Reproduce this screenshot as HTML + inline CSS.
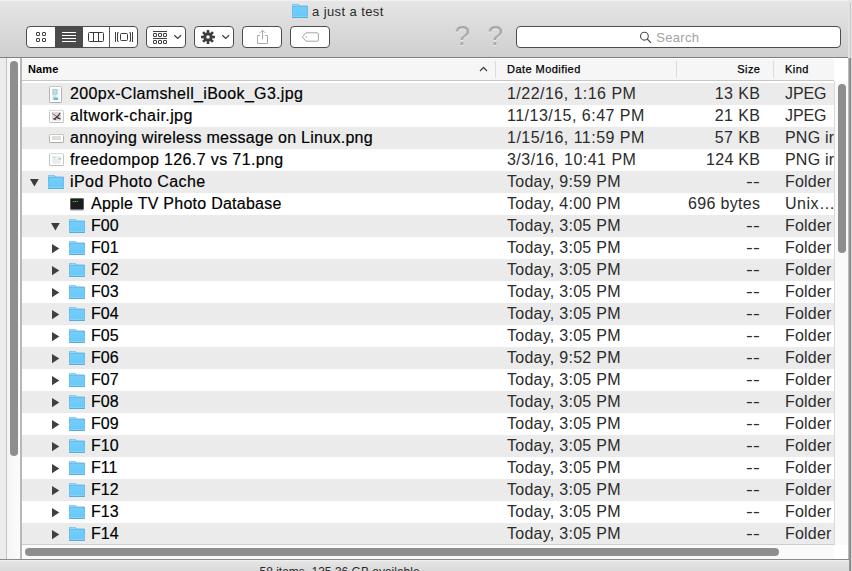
<!DOCTYPE html>
<html><head><meta charset="utf-8"><title>a just a test</title>
<style>
html,body{margin:0;padding:0}
body{width:852px;height:571px;overflow:hidden;position:relative;background:#ececec;font-family:"Liberation Sans",sans-serif;color:#1a1a1a}
.abs{position:absolute}
#toolbar{position:absolute;left:0;top:0;width:849px;border-top-right-radius:4px;height:57px;background:linear-gradient(#e6e6e6,#cfcfcf);border-bottom:1px solid #818181}
#title{position:absolute;left:312px;top:4px;font-size:13px;letter-spacing:0.4px;color:#2a2a2a;line-height:16px;white-space:nowrap}
.btn{position:absolute;top:26px;height:20px;border:1px solid #4e4e4e;border-radius:4px;background:#fff;box-sizing:content-box}
#content{position:absolute;left:22px;top:58px;width:812px;height:487px;background:#fff}
#hdr{position:absolute;left:22px;top:58px;width:812px;height:22px;background:#f6f6f6;border-top:1px solid #fff;box-sizing:content-box;height:21px;border-bottom:1px solid #c6c6c6}
.h{position:absolute;top:63px;font-size:11px;line-height:13px;color:#000;white-space:nowrap;letter-spacing:0.45px;-webkit-text-stroke:0.25px #000}
.vd{position:absolute;top:61px;width:1px;height:17px;background:#dcdcdc}
.row{position:absolute;left:22px;width:812px;height:22px}
.ic{position:absolute;display:block}
.th{position:absolute;background:#fff;box-shadow:0 0 0 0.5px rgba(0,0,0,.3),0 0.6px 1.4px rgba(0,0,0,.45)}
.t{position:absolute;font-size:16px;line-height:22px;height:22px;white-space:nowrap;color:#2b2b2b;margin-top:0px}
.nm{color:#000;-webkit-text-stroke:0.18px #000}
.sz{text-align:right}
.dd{display:inline-block;transform:scaleX(1.27);transform-origin:100% 50%}
.kd{width:49px;overflow:hidden}
</style></head><body>
<svg width="0" height="0" style="position:absolute"><defs><linearGradient id="fg" x1="0" y1="0" x2="0" y2="1"><stop offset="0" stop-color="#74cefa"/><stop offset="1" stop-color="#6ac7f7"/></linearGradient></defs></svg>
<div id="toolbar"></div>
<div class="abs" style="left:0;top:0;width:849px;height:1px;background:#f1f1f1"></div>
<svg class="ic" style="left:292px;top:4px" width="16" height="14" viewBox="0 0 16 14"><path d="M0.300 0.900Q0.300 0.300 0.900 0.300H5.900Q6.500 0.300 6.900 0.800L7.700 2H15.100Q15.700 2 15.700 2.600V6H0.300Z" fill="#8ad5fa" stroke="#56b0e6" stroke-width="0.600"/><path d="M1 1.300H6" stroke="#b2e5fc" stroke-width="0.700"/><path d="M0.300 2.900Q0.300 2.300 0.900 2.300H15.100Q15.700 2.300 15.700 2.900V13.100Q15.700 13.700 15.100 13.700H0.900Q0.300 13.700 0.300 13.100Z" fill="url(#fg)" stroke="#4fabe3" stroke-width="0.600"/><path d="M0.800 12.700H15.200" stroke="#90dcfb" stroke-width="0.700"/><path d="M0.300 13.600H15.700" stroke="#479fd8" stroke-width="0.700"/></svg>
<div id="title">a just a test</div>

<!-- segmented view buttons -->
<div class="btn" style="left:26px;width:110px"></div>
<div class="abs" style="left:55px;top:26px;width:28px;height:22px;background:#4b4b4b"></div>
<div class="abs" style="left:109px;top:27px;width:1px;height:20px;background:#5a5a5a"></div>
<svg class="ic" style="left:26px;top:26px" width="112" height="22" viewBox="0 0 112 22">
 <g fill="none" stroke="#3c3c3c" stroke-width="1">
  <rect x="10.500" y="6.500" width="3" height="3" rx="0.5"/><rect x="16.500" y="6.500" width="3" height="3" rx="0.5"/><rect x="10.500" y="12.500" width="3" height="3" rx="0.5"/><rect x="16.500" y="12.500" width="3" height="3" rx="0.5"/>
 </g>
 <g stroke="#fff" stroke-width="1"><path d="M36 6.500H50M36 9.500H50M36 12.500H50M36 15.500H50"/></g>
 <g fill="none" stroke="#3c3c3c" stroke-width="1"><rect x="62.500" y="6.500" width="15" height="9" rx="1"/><path d="M67.500 6.500V15.500M72.500 6.500V15.500"/></g>
 <g fill="none" stroke="#3c3c3c" stroke-width="1"><rect x="94.500" y="7.500" width="7" height="7" rx="1"/><path d="M89.500 6V16M92.700 6.700H91.500V15.300H92.700M103.300 6.700H104.500V15.300H103.300M106.500 6V16"/></g>
</svg>

<!-- arrange button -->
<div class="btn" style="left:146px;width:38px"></div>
<svg class="ic" style="left:146px;top:26px" width="40" height="22" viewBox="0 0 40 22">
 <g fill="none" stroke="#3c3c3c" stroke-width="1"><path d="M7 5.500H21M7 12.500H21"/><rect x="7.500" y="7.500" width="3" height="3" rx="0.400"/><rect x="12.500" y="7.500" width="3" height="3" rx="0.400"/><rect x="17.500" y="7.500" width="3" height="3" rx="0.400"/><rect x="7.500" y="14.500" width="3" height="3" rx="0.400"/><rect x="12.500" y="14.500" width="3" height="3" rx="0.400"/><rect x="17.500" y="14.500" width="3" height="3" rx="0.400"/>
 <path d="M28.300 9.300L31.700 12.500L35.100 9.300" stroke-width="1.200"/></g>
</svg>

<!-- action button -->
<div class="btn" style="left:194px;width:38px"></div>
<svg class="ic" style="left:194px;top:26px" width="40" height="22" viewBox="0 0 40 22">
 <g transform="translate(14,11)" fill="#3c3c3c">
  <circle r="4.600"/>
  <g id="teeth"><rect x="-1.300" y="-7" width="2.600" height="14"/><rect x="-1.300" y="-7" width="2.600" height="14" transform="rotate(45)"/><rect x="-1.300" y="-7" width="2.600" height="14" transform="rotate(90)"/><rect x="-1.300" y="-7" width="2.600" height="14" transform="rotate(135)"/></g>
  <circle r="1.800" fill="#fff"/>
 </g>
 <path d="M28.300 9.300L31.700 12.500L35.100 9.300" fill="none" stroke="#3c3c3c" stroke-width="1.200"/>
</svg>

<!-- share -->
<div class="btn" style="left:242px;width:38px"></div>
<svg class="ic" style="left:242px;top:26px" width="40" height="22" viewBox="0 0 40 22">
 <g fill="none" stroke="#aaa" stroke-width="1"><path d="M18 9.500H15.500V17.500H25.500V9.500H23"/><path d="M20.500 13.500V4.200M17.700 7L20.500 4.200L23.300 7"/></g>
</svg>

<!-- tag -->
<div class="btn" style="left:290px;width:38px"></div>
<svg class="ic" style="left:290px;top:26px" width="40" height="22" viewBox="0 0 40 22">
 <path d="M12.300 11L16 6.800H27.400Q28.400 6.800 28.400 7.800V14.200Q28.400 15.200 27.400 15.200H16Z" fill="none" stroke="#a4a4a4" stroke-width="1"/><circle cx="16.200" cy="11" r="0.800" fill="#a4a4a4"/>
</svg>

<div class="abs" style="left:454.5px;top:20px;font-size:28px;line-height:32px;color:#a9a9a9;text-shadow:0 1px 0 rgba(255,255,255,.5)">?</div>
<div class="abs" style="left:487.5px;top:20px;font-size:28px;line-height:32px;color:#a9a9a9;text-shadow:0 1px 0 rgba(255,255,255,.5)">?</div>

<!-- search -->
<div class="btn" style="left:516px;width:323px;height:19.5px"></div>
<svg class="ic" style="left:639px;top:31px" width="14" height="14" viewBox="0 0 14 14"><circle cx="5.400" cy="5.200" r="3.900" fill="none" stroke="#4a4a4a" stroke-width="1.100"/><path d="M8.200 8L12 11.800" stroke="#4a4a4a" stroke-width="1.200"/></svg>
<div class="abs" style="left:656.3px;top:29.500px;font-size:13px;letter-spacing:0.3px;line-height:15px;color:#a2a2a2">Search</div>

<!-- left gutter -->
<div class="abs" style="left:0;top:58px;width:6px;height:501px;background:#ececec"></div>
<div class="abs" style="left:6px;top:58px;width:1px;height:501px;background:#c2c2c2"></div>
<div class="abs" style="left:7px;top:58px;width:14px;height:501px;background:linear-gradient(90deg,#f5f5f5,#fcfcfc)"></div>
<div class="abs" style="left:20.300px;top:58px;width:1.600px;height:501px;background:#b8b8b8"></div>
<div class="abs" style="left:10px;top:61px;width:7.800px;height:395px;border-radius:3.900px;background:#8e8e8e"></div>

<div id="content"></div>
<div id="hdr"></div>
<div class="h" style="left:28px;font-weight:bold;letter-spacing:0.15px;-webkit-text-stroke:0">Name</div>
<svg class="ic" style="left:479px;top:66px" width="9" height="6" viewBox="0 0 9 6"><path d="M1 5L4.500 1.500L8 5" fill="none" stroke="#444" stroke-width="1.300"/></svg>
<div class="vd" style="left:495px"></div>
<div class="h" style="left:507px">Date Modified</div>
<div class="vd" style="left:676px"></div>
<div class="h" style="left:700.45px;width:60px;text-align:right">Size</div>
<div class="vd" style="left:773px"></div>
<div class="h" style="left:785px">Kind</div>

<div class="row" style="top:83px;background:#ebebeb">
</div>
<div class="th" style="left:50px;top:87px;width:11px;height:14.5px"></div><svg class="ic" style="left:51.5px;top:88.5px" width="8" height="11.500" viewBox="0 0 8 11.5"><rect width="8" height="11.500" fill="#e9f1f1"/><rect x="0.5" y="0" width="5.500" height="5.500" fill="#9ccdd2"/><rect x="1.500" y="1" width="3" height="3.500" fill="#c4e2e4"/><rect x="5.500" y="0" width="2.500" height="11.500" fill="#f6f8f8"/><rect x="1" y="6" width="3" height="2.500" fill="#d5e5e6"/><rect x="1.500" y="8.500" width="4.500" height="2.500" fill="#74b7c2"/></svg>
<div class="t nm" style="left:70px;top:83px;letter-spacing:0.324px">200px-Clamshell_iBook_G3.jpg</div>
<div class="t dt" style="left:507px;top:83px;letter-spacing:0.467px">1/22/16, 1:16 PM</div>
<div class="t sz" style="left:660.400px;width:100px;top:83px;letter-spacing:0.400px">13 KB</div>
<div class="t kd" style="left:785px;top:83px;letter-spacing:-0.100px">JPEG</div>
<div class="row" style="top:105px;background:#ffffff">
</div>
<div class="th" style="left:50px;top:110.7px;width:12.5px;height:11.5px"></div><svg class="ic" style="left:51.5px;top:112.2px" width="9.500" height="8.500" viewBox="0 0 9.5 8.5"><rect width="9.500" height="8.500" fill="#d9dade"/><path d="M0.300 1.500L7.500 6.300" stroke="#cf4a3c" stroke-width="1"/><path d="M2 7.500L6.500 3.500L8 1M4.500 5.500L8.500 7" stroke="#3a3a40" stroke-width="1.200" fill="none"/><path d="M1 6.500L4 7.800" stroke="#555" stroke-width="1"/></svg>
<div class="t nm" style="left:70px;top:105px;letter-spacing:0.420px">altwork-chair.jpg</div>
<div class="t dt" style="left:507px;top:105px;letter-spacing:0.484px">11/13/15, 6:47 PM</div>
<div class="t sz" style="left:660.400px;width:100px;top:105px;letter-spacing:0.400px">21 KB</div>
<div class="t kd" style="left:785px;top:105px;letter-spacing:-0.100px">JPEG</div>
<div class="row" style="top:127px;background:#ebebeb">
</div>
<div class="th" style="left:50px;top:134.5px;width:12.5px;height:7px"></div><div class="abs" style="left:51.5px;top:136px;width:9.5px;height:4px;background:#dfdfd8"></div>
<div class="t nm" style="left:70px;top:127px;letter-spacing:0.270px">annoying wireless message on Linux.png</div>
<div class="t dt" style="left:507px;top:127px;letter-spacing:0.484px">1/15/16, 11:59 PM</div>
<div class="t sz" style="left:660.400px;width:100px;top:127px;letter-spacing:0.400px">57 KB</div>
<div class="t kd" style="left:785px;top:127px;letter-spacing:0.200px">PNG ir</div>
<div class="row" style="top:149px;background:#ffffff">
</div>
<div class="th" style="left:50px;top:154px;width:12.5px;height:11.3px"></div><svg class="ic" style="left:51.5px;top:155.5px" width="9.500" height="8.300" viewBox="0 0 9.5 8.3"><rect width="9.500" height="8.300" fill="#f1f3f3"/><rect x="0.5" y="1" width="3" height="1" fill="#bcd7ee"/><rect x="6.500" y="2" width="2.500" height="1.500" fill="#8fd694"/><rect x="0.5" y="3.500" width="5" height="0.800" fill="#e2dada"/><rect x="0.5" y="5.500" width="8" height="0.800" fill="#dfe6e6"/></svg>
<div class="t nm" style="left:70px;top:149px;letter-spacing:0.380px">freedompop 126.7 vs 71.png</div>
<div class="t dt" style="left:507px;top:149px;letter-spacing:0.467px">3/3/16, 10:41 PM</div>
<div class="t sz" style="left:660.280px;width:100px;top:149px;letter-spacing:0.280px">124 KB</div>
<div class="t kd" style="left:785px;top:149px;letter-spacing:0.200px">PNG ir</div>
<div class="row" style="top:171px;background:#ebebeb">
</div>
<svg class="ic" style="left:29.8px;top:179.2px" width="9" height="8" viewBox="0 0 9 8"><path d="M0 0L8.800 0L4.400 7.400Z" fill="#3c3c3c"/></svg>
<svg class="ic" style="left:48px;top:175px" width="16" height="14" viewBox="0 0 16 14"><path d="M0.300 0.900Q0.300 0.300 0.900 0.300H5.900Q6.500 0.300 6.900 0.800L7.700 2H15.100Q15.700 2 15.700 2.600V6H0.300Z" fill="#8ad5fa" stroke="#56b0e6" stroke-width="0.600"/><path d="M1 1.300H6" stroke="#b2e5fc" stroke-width="0.700"/><path d="M0.300 2.900Q0.300 2.300 0.900 2.300H15.100Q15.700 2.300 15.700 2.900V13.100Q15.700 13.700 15.100 13.700H0.900Q0.300 13.700 0.300 13.100Z" fill="url(#fg)" stroke="#4fabe3" stroke-width="0.600"/><path d="M0.800 12.700H15.200" stroke="#90dcfb" stroke-width="0.700"/><path d="M0.300 13.600H15.700" stroke="#479fd8" stroke-width="0.700"/></svg>
<div class="t nm" style="left:70px;top:171px;letter-spacing:0.417px">iPod Photo Cache</div>
<div class="t dt" style="left:507px;top:171px;letter-spacing:0.270px">Today, 9:59 PM</div>
<div class="t sz" style="left:660.000px;width:100px;top:171px;letter-spacing:0.000px"><span class="dd">--</span></div>
<div class="t kd" style="left:785px;top:171px;letter-spacing:0.200px">Folder</div>
<div class="row" style="top:193px;background:#ffffff">
</div>
<svg class="ic" style="left:70px;top:198px" width="14" height="13" viewBox="0 0 14 13"><rect x="0.200" y="0.300" width="13.600" height="12.200" rx="1" fill="#9a9a9a"/><rect x="0.200" y="0.300" width="13.600" height="11.300" rx="1" fill="#555"/><rect x="0.900" y="1" width="12.200" height="10" rx="0.5" fill="#1d1d1d"/><rect x="2.800" y="3" width="1.300" height="1" fill="#3fc943"/><rect x="4.700" y="3" width="1.300" height="1" fill="#3fc943"/><rect x="6.600" y="3" width="1.300" height="1" fill="#3fc943"/></svg>
<div class="t nm" style="left:91px;top:193px;letter-spacing:0.260px">Apple TV Photo Database</div>
<div class="t dt" style="left:507px;top:193px;letter-spacing:0.270px">Today, 4:00 PM</div>
<div class="t sz" style="left:660.330px;width:100px;top:193px;letter-spacing:0.330px">696 bytes</div>
<div class="t kd" style="left:785px;top:193px;letter-spacing:0.500px">Unix…</div>
<div class="row" style="top:215px;background:#ebebeb">
</div>
<svg class="ic" style="left:50.8px;top:223.2px" width="9" height="8" viewBox="0 0 9 8"><path d="M0 0L8.800 0L4.400 7.400Z" fill="#3c3c3c"/></svg>
<svg class="ic" style="left:69px;top:219px" width="16" height="14" viewBox="0 0 16 14"><path d="M0.300 0.900Q0.300 0.300 0.900 0.300H5.900Q6.500 0.300 6.900 0.800L7.700 2H15.100Q15.700 2 15.700 2.600V6H0.300Z" fill="#8ad5fa" stroke="#56b0e6" stroke-width="0.600"/><path d="M1 1.300H6" stroke="#b2e5fc" stroke-width="0.700"/><path d="M0.300 2.900Q0.300 2.300 0.900 2.300H15.100Q15.700 2.300 15.700 2.900V13.100Q15.700 13.700 15.100 13.700H0.900Q0.300 13.700 0.300 13.100Z" fill="url(#fg)" stroke="#4fabe3" stroke-width="0.600"/><path d="M0.800 12.700H15.200" stroke="#90dcfb" stroke-width="0.700"/><path d="M0.300 13.600H15.700" stroke="#479fd8" stroke-width="0.700"/></svg>
<div class="t nm" style="left:91px;top:215px;letter-spacing:0.000px">F00</div>
<div class="t dt" style="left:507px;top:215px;letter-spacing:0.270px">Today, 3:05 PM</div>
<div class="t sz" style="left:660.000px;width:100px;top:215px;letter-spacing:0.000px"><span class="dd">--</span></div>
<div class="t kd" style="left:785px;top:215px;letter-spacing:0.200px">Folder</div>
<div class="row" style="top:237px;background:#ffffff">
</div>
<svg class="ic" style="left:52px;top:243.6px" width="8" height="10" viewBox="0 0 8 10"><path d="M0 0L7.300 4.600L0 9.200Z" fill="#404040"/></svg>
<svg class="ic" style="left:69px;top:241px" width="16" height="14" viewBox="0 0 16 14"><path d="M0.300 0.900Q0.300 0.300 0.900 0.300H5.900Q6.500 0.300 6.900 0.800L7.700 2H15.100Q15.700 2 15.700 2.600V6H0.300Z" fill="#8ad5fa" stroke="#56b0e6" stroke-width="0.600"/><path d="M1 1.300H6" stroke="#b2e5fc" stroke-width="0.700"/><path d="M0.300 2.900Q0.300 2.300 0.900 2.300H15.100Q15.700 2.300 15.700 2.900V13.100Q15.700 13.700 15.100 13.700H0.900Q0.300 13.700 0.300 13.100Z" fill="url(#fg)" stroke="#4fabe3" stroke-width="0.600"/><path d="M0.800 12.700H15.200" stroke="#90dcfb" stroke-width="0.700"/><path d="M0.300 13.600H15.700" stroke="#479fd8" stroke-width="0.700"/></svg>
<div class="t nm" style="left:91px;top:237px;letter-spacing:0.000px">F01</div>
<div class="t dt" style="left:507px;top:237px;letter-spacing:0.270px">Today, 3:05 PM</div>
<div class="t sz" style="left:660.000px;width:100px;top:237px;letter-spacing:0.000px"><span class="dd">--</span></div>
<div class="t kd" style="left:785px;top:237px;letter-spacing:0.200px">Folder</div>
<div class="row" style="top:259px;background:#ebebeb">
</div>
<svg class="ic" style="left:52px;top:265.6px" width="8" height="10" viewBox="0 0 8 10"><path d="M0 0L7.300 4.600L0 9.200Z" fill="#404040"/></svg>
<svg class="ic" style="left:69px;top:263px" width="16" height="14" viewBox="0 0 16 14"><path d="M0.300 0.900Q0.300 0.300 0.900 0.300H5.900Q6.500 0.300 6.900 0.800L7.700 2H15.100Q15.700 2 15.700 2.600V6H0.300Z" fill="#8ad5fa" stroke="#56b0e6" stroke-width="0.600"/><path d="M1 1.300H6" stroke="#b2e5fc" stroke-width="0.700"/><path d="M0.300 2.900Q0.300 2.300 0.900 2.300H15.100Q15.700 2.300 15.700 2.900V13.100Q15.700 13.700 15.100 13.700H0.900Q0.300 13.700 0.300 13.100Z" fill="url(#fg)" stroke="#4fabe3" stroke-width="0.600"/><path d="M0.800 12.700H15.200" stroke="#90dcfb" stroke-width="0.700"/><path d="M0.300 13.600H15.700" stroke="#479fd8" stroke-width="0.700"/></svg>
<div class="t nm" style="left:91px;top:259px;letter-spacing:0.000px">F02</div>
<div class="t dt" style="left:507px;top:259px;letter-spacing:0.270px">Today, 3:05 PM</div>
<div class="t sz" style="left:660.000px;width:100px;top:259px;letter-spacing:0.000px"><span class="dd">--</span></div>
<div class="t kd" style="left:785px;top:259px;letter-spacing:0.200px">Folder</div>
<div class="row" style="top:281px;background:#ffffff">
</div>
<svg class="ic" style="left:52px;top:287.6px" width="8" height="10" viewBox="0 0 8 10"><path d="M0 0L7.300 4.600L0 9.200Z" fill="#404040"/></svg>
<svg class="ic" style="left:69px;top:285px" width="16" height="14" viewBox="0 0 16 14"><path d="M0.300 0.900Q0.300 0.300 0.900 0.300H5.900Q6.500 0.300 6.900 0.800L7.700 2H15.100Q15.700 2 15.700 2.600V6H0.300Z" fill="#8ad5fa" stroke="#56b0e6" stroke-width="0.600"/><path d="M1 1.300H6" stroke="#b2e5fc" stroke-width="0.700"/><path d="M0.300 2.900Q0.300 2.300 0.900 2.300H15.100Q15.700 2.300 15.700 2.900V13.100Q15.700 13.700 15.100 13.700H0.900Q0.300 13.700 0.300 13.100Z" fill="url(#fg)" stroke="#4fabe3" stroke-width="0.600"/><path d="M0.800 12.700H15.200" stroke="#90dcfb" stroke-width="0.700"/><path d="M0.300 13.600H15.700" stroke="#479fd8" stroke-width="0.700"/></svg>
<div class="t nm" style="left:91px;top:281px;letter-spacing:0.000px">F03</div>
<div class="t dt" style="left:507px;top:281px;letter-spacing:0.270px">Today, 3:05 PM</div>
<div class="t sz" style="left:660.000px;width:100px;top:281px;letter-spacing:0.000px"><span class="dd">--</span></div>
<div class="t kd" style="left:785px;top:281px;letter-spacing:0.200px">Folder</div>
<div class="row" style="top:303px;background:#ebebeb">
</div>
<svg class="ic" style="left:52px;top:309.6px" width="8" height="10" viewBox="0 0 8 10"><path d="M0 0L7.300 4.600L0 9.200Z" fill="#404040"/></svg>
<svg class="ic" style="left:69px;top:307px" width="16" height="14" viewBox="0 0 16 14"><path d="M0.300 0.900Q0.300 0.300 0.900 0.300H5.900Q6.500 0.300 6.900 0.800L7.700 2H15.100Q15.700 2 15.700 2.600V6H0.300Z" fill="#8ad5fa" stroke="#56b0e6" stroke-width="0.600"/><path d="M1 1.300H6" stroke="#b2e5fc" stroke-width="0.700"/><path d="M0.300 2.900Q0.300 2.300 0.900 2.300H15.100Q15.700 2.300 15.700 2.900V13.100Q15.700 13.700 15.100 13.700H0.900Q0.300 13.700 0.300 13.100Z" fill="url(#fg)" stroke="#4fabe3" stroke-width="0.600"/><path d="M0.800 12.700H15.200" stroke="#90dcfb" stroke-width="0.700"/><path d="M0.300 13.600H15.700" stroke="#479fd8" stroke-width="0.700"/></svg>
<div class="t nm" style="left:91px;top:303px;letter-spacing:0.000px">F04</div>
<div class="t dt" style="left:507px;top:303px;letter-spacing:0.270px">Today, 3:05 PM</div>
<div class="t sz" style="left:660.000px;width:100px;top:303px;letter-spacing:0.000px"><span class="dd">--</span></div>
<div class="t kd" style="left:785px;top:303px;letter-spacing:0.200px">Folder</div>
<div class="row" style="top:325px;background:#ffffff">
</div>
<svg class="ic" style="left:52px;top:331.6px" width="8" height="10" viewBox="0 0 8 10"><path d="M0 0L7.300 4.600L0 9.200Z" fill="#404040"/></svg>
<svg class="ic" style="left:69px;top:329px" width="16" height="14" viewBox="0 0 16 14"><path d="M0.300 0.900Q0.300 0.300 0.900 0.300H5.900Q6.500 0.300 6.900 0.800L7.700 2H15.100Q15.700 2 15.700 2.600V6H0.300Z" fill="#8ad5fa" stroke="#56b0e6" stroke-width="0.600"/><path d="M1 1.300H6" stroke="#b2e5fc" stroke-width="0.700"/><path d="M0.300 2.900Q0.300 2.300 0.900 2.300H15.100Q15.700 2.300 15.700 2.900V13.100Q15.700 13.700 15.100 13.700H0.900Q0.300 13.700 0.300 13.100Z" fill="url(#fg)" stroke="#4fabe3" stroke-width="0.600"/><path d="M0.800 12.700H15.200" stroke="#90dcfb" stroke-width="0.700"/><path d="M0.300 13.600H15.700" stroke="#479fd8" stroke-width="0.700"/></svg>
<div class="t nm" style="left:91px;top:325px;letter-spacing:0.000px">F05</div>
<div class="t dt" style="left:507px;top:325px;letter-spacing:0.270px">Today, 3:05 PM</div>
<div class="t sz" style="left:660.000px;width:100px;top:325px;letter-spacing:0.000px"><span class="dd">--</span></div>
<div class="t kd" style="left:785px;top:325px;letter-spacing:0.200px">Folder</div>
<div class="row" style="top:347px;background:#ebebeb">
</div>
<svg class="ic" style="left:52px;top:353.6px" width="8" height="10" viewBox="0 0 8 10"><path d="M0 0L7.300 4.600L0 9.200Z" fill="#404040"/></svg>
<svg class="ic" style="left:69px;top:351px" width="16" height="14" viewBox="0 0 16 14"><path d="M0.300 0.900Q0.300 0.300 0.900 0.300H5.900Q6.500 0.300 6.900 0.800L7.700 2H15.100Q15.700 2 15.700 2.600V6H0.300Z" fill="#8ad5fa" stroke="#56b0e6" stroke-width="0.600"/><path d="M1 1.300H6" stroke="#b2e5fc" stroke-width="0.700"/><path d="M0.300 2.900Q0.300 2.300 0.900 2.300H15.100Q15.700 2.300 15.700 2.900V13.100Q15.700 13.700 15.100 13.700H0.900Q0.300 13.700 0.300 13.100Z" fill="url(#fg)" stroke="#4fabe3" stroke-width="0.600"/><path d="M0.800 12.700H15.200" stroke="#90dcfb" stroke-width="0.700"/><path d="M0.300 13.600H15.700" stroke="#479fd8" stroke-width="0.700"/></svg>
<div class="t nm" style="left:91px;top:347px;letter-spacing:0.000px">F06</div>
<div class="t dt" style="left:507px;top:347px;letter-spacing:0.270px">Today, 9:52 PM</div>
<div class="t sz" style="left:660.000px;width:100px;top:347px;letter-spacing:0.000px"><span class="dd">--</span></div>
<div class="t kd" style="left:785px;top:347px;letter-spacing:0.200px">Folder</div>
<div class="row" style="top:369px;background:#ffffff">
</div>
<svg class="ic" style="left:52px;top:375.6px" width="8" height="10" viewBox="0 0 8 10"><path d="M0 0L7.300 4.600L0 9.200Z" fill="#404040"/></svg>
<svg class="ic" style="left:69px;top:373px" width="16" height="14" viewBox="0 0 16 14"><path d="M0.300 0.900Q0.300 0.300 0.900 0.300H5.900Q6.500 0.300 6.900 0.800L7.700 2H15.100Q15.700 2 15.700 2.600V6H0.300Z" fill="#8ad5fa" stroke="#56b0e6" stroke-width="0.600"/><path d="M1 1.300H6" stroke="#b2e5fc" stroke-width="0.700"/><path d="M0.300 2.900Q0.300 2.300 0.900 2.300H15.100Q15.700 2.300 15.700 2.900V13.100Q15.700 13.700 15.100 13.700H0.900Q0.300 13.700 0.300 13.100Z" fill="url(#fg)" stroke="#4fabe3" stroke-width="0.600"/><path d="M0.800 12.700H15.200" stroke="#90dcfb" stroke-width="0.700"/><path d="M0.300 13.600H15.700" stroke="#479fd8" stroke-width="0.700"/></svg>
<div class="t nm" style="left:91px;top:369px;letter-spacing:0.000px">F07</div>
<div class="t dt" style="left:507px;top:369px;letter-spacing:0.270px">Today, 3:05 PM</div>
<div class="t sz" style="left:660.000px;width:100px;top:369px;letter-spacing:0.000px"><span class="dd">--</span></div>
<div class="t kd" style="left:785px;top:369px;letter-spacing:0.200px">Folder</div>
<div class="row" style="top:391px;background:#ebebeb">
</div>
<svg class="ic" style="left:52px;top:397.6px" width="8" height="10" viewBox="0 0 8 10"><path d="M0 0L7.300 4.600L0 9.200Z" fill="#404040"/></svg>
<svg class="ic" style="left:69px;top:395px" width="16" height="14" viewBox="0 0 16 14"><path d="M0.300 0.900Q0.300 0.300 0.900 0.300H5.900Q6.500 0.300 6.900 0.800L7.700 2H15.100Q15.700 2 15.700 2.600V6H0.300Z" fill="#8ad5fa" stroke="#56b0e6" stroke-width="0.600"/><path d="M1 1.300H6" stroke="#b2e5fc" stroke-width="0.700"/><path d="M0.300 2.900Q0.300 2.300 0.900 2.300H15.100Q15.700 2.300 15.700 2.900V13.100Q15.700 13.700 15.100 13.700H0.900Q0.300 13.700 0.300 13.100Z" fill="url(#fg)" stroke="#4fabe3" stroke-width="0.600"/><path d="M0.800 12.700H15.200" stroke="#90dcfb" stroke-width="0.700"/><path d="M0.300 13.600H15.700" stroke="#479fd8" stroke-width="0.700"/></svg>
<div class="t nm" style="left:91px;top:391px;letter-spacing:0.000px">F08</div>
<div class="t dt" style="left:507px;top:391px;letter-spacing:0.270px">Today, 3:05 PM</div>
<div class="t sz" style="left:660.000px;width:100px;top:391px;letter-spacing:0.000px"><span class="dd">--</span></div>
<div class="t kd" style="left:785px;top:391px;letter-spacing:0.200px">Folder</div>
<div class="row" style="top:413px;background:#ffffff">
</div>
<svg class="ic" style="left:52px;top:419.6px" width="8" height="10" viewBox="0 0 8 10"><path d="M0 0L7.300 4.600L0 9.200Z" fill="#404040"/></svg>
<svg class="ic" style="left:69px;top:417px" width="16" height="14" viewBox="0 0 16 14"><path d="M0.300 0.900Q0.300 0.300 0.900 0.300H5.900Q6.500 0.300 6.900 0.800L7.700 2H15.100Q15.700 2 15.700 2.600V6H0.300Z" fill="#8ad5fa" stroke="#56b0e6" stroke-width="0.600"/><path d="M1 1.300H6" stroke="#b2e5fc" stroke-width="0.700"/><path d="M0.300 2.900Q0.300 2.300 0.900 2.300H15.100Q15.700 2.300 15.700 2.900V13.100Q15.700 13.700 15.100 13.700H0.900Q0.300 13.700 0.300 13.100Z" fill="url(#fg)" stroke="#4fabe3" stroke-width="0.600"/><path d="M0.800 12.700H15.200" stroke="#90dcfb" stroke-width="0.700"/><path d="M0.300 13.600H15.700" stroke="#479fd8" stroke-width="0.700"/></svg>
<div class="t nm" style="left:91px;top:413px;letter-spacing:0.000px">F09</div>
<div class="t dt" style="left:507px;top:413px;letter-spacing:0.270px">Today, 3:05 PM</div>
<div class="t sz" style="left:660.000px;width:100px;top:413px;letter-spacing:0.000px"><span class="dd">--</span></div>
<div class="t kd" style="left:785px;top:413px;letter-spacing:0.200px">Folder</div>
<div class="row" style="top:435px;background:#ebebeb">
</div>
<svg class="ic" style="left:52px;top:441.6px" width="8" height="10" viewBox="0 0 8 10"><path d="M0 0L7.300 4.600L0 9.200Z" fill="#404040"/></svg>
<svg class="ic" style="left:69px;top:439px" width="16" height="14" viewBox="0 0 16 14"><path d="M0.300 0.900Q0.300 0.300 0.900 0.300H5.900Q6.500 0.300 6.900 0.800L7.700 2H15.100Q15.700 2 15.700 2.600V6H0.300Z" fill="#8ad5fa" stroke="#56b0e6" stroke-width="0.600"/><path d="M1 1.300H6" stroke="#b2e5fc" stroke-width="0.700"/><path d="M0.300 2.900Q0.300 2.300 0.900 2.300H15.100Q15.700 2.300 15.700 2.900V13.100Q15.700 13.700 15.100 13.700H0.900Q0.300 13.700 0.300 13.100Z" fill="url(#fg)" stroke="#4fabe3" stroke-width="0.600"/><path d="M0.800 12.700H15.200" stroke="#90dcfb" stroke-width="0.700"/><path d="M0.300 13.600H15.700" stroke="#479fd8" stroke-width="0.700"/></svg>
<div class="t nm" style="left:91px;top:435px;letter-spacing:0.000px">F10</div>
<div class="t dt" style="left:507px;top:435px;letter-spacing:0.270px">Today, 3:05 PM</div>
<div class="t sz" style="left:660.000px;width:100px;top:435px;letter-spacing:0.000px"><span class="dd">--</span></div>
<div class="t kd" style="left:785px;top:435px;letter-spacing:0.200px">Folder</div>
<div class="row" style="top:457px;background:#ffffff">
</div>
<svg class="ic" style="left:52px;top:463.6px" width="8" height="10" viewBox="0 0 8 10"><path d="M0 0L7.300 4.600L0 9.200Z" fill="#404040"/></svg>
<svg class="ic" style="left:69px;top:461px" width="16" height="14" viewBox="0 0 16 14"><path d="M0.300 0.900Q0.300 0.300 0.900 0.300H5.900Q6.500 0.300 6.900 0.800L7.700 2H15.100Q15.700 2 15.700 2.600V6H0.300Z" fill="#8ad5fa" stroke="#56b0e6" stroke-width="0.600"/><path d="M1 1.300H6" stroke="#b2e5fc" stroke-width="0.700"/><path d="M0.300 2.900Q0.300 2.300 0.900 2.300H15.100Q15.700 2.300 15.700 2.900V13.100Q15.700 13.700 15.100 13.700H0.900Q0.300 13.700 0.300 13.100Z" fill="url(#fg)" stroke="#4fabe3" stroke-width="0.600"/><path d="M0.800 12.700H15.200" stroke="#90dcfb" stroke-width="0.700"/><path d="M0.300 13.600H15.700" stroke="#479fd8" stroke-width="0.700"/></svg>
<div class="t nm" style="left:91px;top:457px;letter-spacing:0.000px">F11</div>
<div class="t dt" style="left:507px;top:457px;letter-spacing:0.270px">Today, 3:05 PM</div>
<div class="t sz" style="left:660.000px;width:100px;top:457px;letter-spacing:0.000px"><span class="dd">--</span></div>
<div class="t kd" style="left:785px;top:457px;letter-spacing:0.200px">Folder</div>
<div class="row" style="top:479px;background:#ebebeb">
</div>
<svg class="ic" style="left:52px;top:485.6px" width="8" height="10" viewBox="0 0 8 10"><path d="M0 0L7.300 4.600L0 9.200Z" fill="#404040"/></svg>
<svg class="ic" style="left:69px;top:483px" width="16" height="14" viewBox="0 0 16 14"><path d="M0.300 0.900Q0.300 0.300 0.900 0.300H5.900Q6.500 0.300 6.900 0.800L7.700 2H15.100Q15.700 2 15.700 2.600V6H0.300Z" fill="#8ad5fa" stroke="#56b0e6" stroke-width="0.600"/><path d="M1 1.300H6" stroke="#b2e5fc" stroke-width="0.700"/><path d="M0.300 2.900Q0.300 2.300 0.900 2.300H15.100Q15.700 2.300 15.700 2.900V13.100Q15.700 13.700 15.100 13.700H0.900Q0.300 13.700 0.300 13.100Z" fill="url(#fg)" stroke="#4fabe3" stroke-width="0.600"/><path d="M0.800 12.700H15.200" stroke="#90dcfb" stroke-width="0.700"/><path d="M0.300 13.600H15.700" stroke="#479fd8" stroke-width="0.700"/></svg>
<div class="t nm" style="left:91px;top:479px;letter-spacing:0.000px">F12</div>
<div class="t dt" style="left:507px;top:479px;letter-spacing:0.270px">Today, 3:05 PM</div>
<div class="t sz" style="left:660.000px;width:100px;top:479px;letter-spacing:0.000px"><span class="dd">--</span></div>
<div class="t kd" style="left:785px;top:479px;letter-spacing:0.200px">Folder</div>
<div class="row" style="top:501px;background:#ffffff">
</div>
<svg class="ic" style="left:52px;top:507.6px" width="8" height="10" viewBox="0 0 8 10"><path d="M0 0L7.300 4.600L0 9.200Z" fill="#404040"/></svg>
<svg class="ic" style="left:69px;top:505px" width="16" height="14" viewBox="0 0 16 14"><path d="M0.300 0.900Q0.300 0.300 0.900 0.300H5.900Q6.500 0.300 6.900 0.800L7.700 2H15.100Q15.700 2 15.700 2.600V6H0.300Z" fill="#8ad5fa" stroke="#56b0e6" stroke-width="0.600"/><path d="M1 1.300H6" stroke="#b2e5fc" stroke-width="0.700"/><path d="M0.300 2.900Q0.300 2.300 0.900 2.300H15.100Q15.700 2.300 15.700 2.900V13.100Q15.700 13.700 15.100 13.700H0.900Q0.300 13.700 0.300 13.100Z" fill="url(#fg)" stroke="#4fabe3" stroke-width="0.600"/><path d="M0.800 12.700H15.200" stroke="#90dcfb" stroke-width="0.700"/><path d="M0.300 13.600H15.700" stroke="#479fd8" stroke-width="0.700"/></svg>
<div class="t nm" style="left:91px;top:501px;letter-spacing:0.000px">F13</div>
<div class="t dt" style="left:507px;top:501px;letter-spacing:0.270px">Today, 3:05 PM</div>
<div class="t sz" style="left:660.000px;width:100px;top:501px;letter-spacing:0.000px"><span class="dd">--</span></div>
<div class="t kd" style="left:785px;top:501px;letter-spacing:0.200px">Folder</div>
<div class="row" style="top:523px;background:#ebebeb">
</div>
<svg class="ic" style="left:52px;top:529.6px" width="8" height="10" viewBox="0 0 8 10"><path d="M0 0L7.300 4.600L0 9.200Z" fill="#404040"/></svg>
<svg class="ic" style="left:69px;top:527px" width="16" height="14" viewBox="0 0 16 14"><path d="M0.300 0.900Q0.300 0.300 0.900 0.300H5.900Q6.500 0.300 6.900 0.800L7.700 2H15.100Q15.700 2 15.700 2.600V6H0.300Z" fill="#8ad5fa" stroke="#56b0e6" stroke-width="0.600"/><path d="M1 1.300H6" stroke="#b2e5fc" stroke-width="0.700"/><path d="M0.300 2.900Q0.300 2.300 0.900 2.300H15.100Q15.700 2.300 15.700 2.900V13.100Q15.700 13.700 15.100 13.700H0.900Q0.300 13.700 0.300 13.100Z" fill="url(#fg)" stroke="#4fabe3" stroke-width="0.600"/><path d="M0.800 12.700H15.200" stroke="#90dcfb" stroke-width="0.700"/><path d="M0.300 13.600H15.700" stroke="#479fd8" stroke-width="0.700"/></svg>
<div class="t nm" style="left:91px;top:523px;letter-spacing:0.000px">F14</div>
<div class="t dt" style="left:507px;top:523px;letter-spacing:0.270px">Today, 3:05 PM</div>
<div class="t sz" style="left:660.000px;width:100px;top:523px;letter-spacing:0.000px"><span class="dd">--</span></div>
<div class="t kd" style="left:785px;top:523px;letter-spacing:0.200px">Folder</div>

<!-- right gutter / scrollbars -->
<div class="abs" style="left:834px;top:58px;width:15px;height:501px;background:#fff"></div>
<div class="abs" style="left:835px;top:81px;width:14px;height:464px;background:#fafafa"></div>
<div class="abs" style="left:834px;top:81px;width:1px;height:464px;background:#dadada"></div>
<div class="abs" style="left:838.2px;top:84px;width:7.6px;height:169px;border-radius:3.8px;background:#8e8e8e"></div>
<div class="abs" style="left:848px;top:0;width:4px;height:571px;background:#e3e3e3"></div>
<div class="abs" style="left:849.8px;top:3px;width:1.4px;height:55px;background:#c6c6c6"></div>
<div class="abs" style="left:848.4px;top:58px;width:2.4px;height:513px;background:linear-gradient(90deg,#cfcfcf,#8a8a8a 60%,#858585)"></div>
<div class="abs" style="left:850.8px;top:58px;width:1.2px;height:513px;background:#d9d9d9"></div>

<!-- horizontal scrollbar -->
<div class="abs" style="left:22px;top:544px;width:812px;height:14px;background:#fafafa;border-top:1px solid #cdcdcd"></div>
<div class="abs" style="left:25px;top:548px;width:754px;height:8px;border-radius:4px;background:#8e8e8e"></div>

<!-- status bar -->
<div class="abs" style="left:0;top:558.5px;width:848.5px;height:13px;background:linear-gradient(#e7e7e7,#d7d7d7);border-top:1px solid #8a8a8a"></div>
<div class="abs" style="left:0;top:560px;width:848px;height:1px;background:#f0f0f0"></div>
<div class="abs" style="left:259.5px;top:564.7px;font-size:12px;line-height:14px;color:#2a2a2a;white-space:nowrap">58 items, 135.36 GB available</div>
</body></html>
